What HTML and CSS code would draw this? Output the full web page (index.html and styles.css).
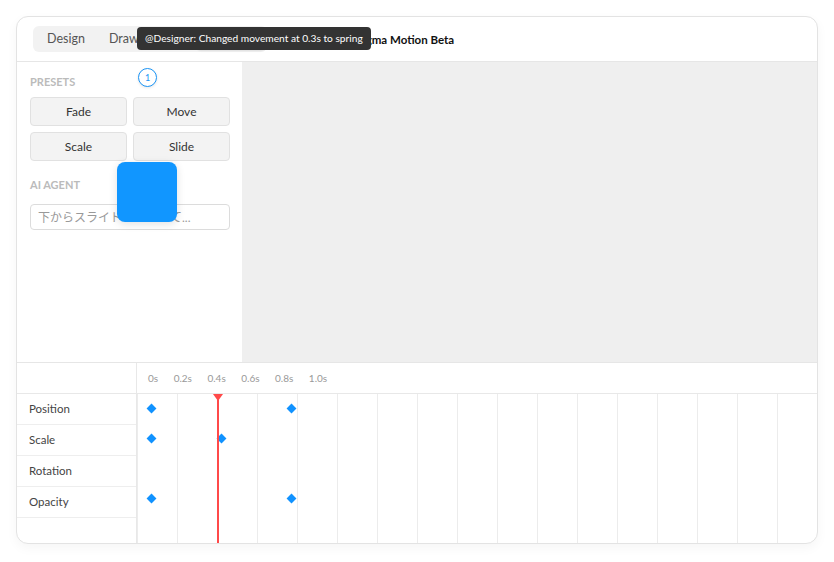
FILE: index.html
```html
<!DOCTYPE html>
<html lang="en">
<head>
    <meta charset="UTF-8">
    <meta name="viewport" content="width=device-width, initial-scale=1.0">
    <title>Figma Motion Beta</title>
    <link rel="stylesheet" href="styles.css">
</head>
<body>
<div class="app">
    <div class="header">
        <div class="tabs">
            <span class="tab">Design</span>
            <span class="tab">Draw</span>
            <span class="tab">Dev</span>
            <span class="tab active">Motion</span>
        </div>
        <div class="title">Figma Motion Beta</div>
    </div>
    <div class="tooltip">@Designer: Changed movement at 0.3s to spring</div>

    <div class="main">
        <div class="sidebar">
            <div class="section-label">PRESETS</div>
            <div class="preset-grid">
                <button class="preset">Fade</button>
                <button class="preset">Move</button>
                <button class="preset">Scale</button>
                <button class="preset">Slide</button>
            </div>
            <div class="section-label agent-label">AI AGENT</div>
            <input class="agent-input" type="text" placeholder="下からスライドインさせて...">
            <span class="comment-badge">1</span>
            <div class="drag-box"></div>
        </div>
        <div class="canvas"></div>
    </div>

    <div class="timeline">
        <div class="corner"></div>
        <div class="ruler">
            <span>0s</span>
            <span>0.2s</span>
            <span>0.4s</span>
            <span>0.6s</span>
            <span>0.8s</span>
            <span>1.0s</span>
        </div>
        <div class="labels">
            <div class="label-row">Position</div>
            <div class="label-row">Scale</div>
            <div class="label-row">Rotation</div>
            <div class="label-row">Opacity</div>
        </div>
        <div class="tracks">
            <div class="track">
                <span class="key" style="left: 14px"></span>
                <span class="key" style="left: 154px"></span>
            </div>
            <div class="track">
                <span class="key" style="left: 14px"></span>
                <span class="key" style="left: 84px"></span>
            </div>
            <div class="track"></div>
            <div class="track">
                <span class="key" style="left: 14px"></span>
                <span class="key" style="left: 154px"></span>
            </div>
            <div class="playhead" style="left: 80px"></div>
        </div>
    </div>
</div>
</body>
</html>
```

FILE: styles.css
```css
body {
    font-family: 'Lato', 'Noto Sans CJK JP', sans-serif;
    background-color: #ffffff;
    margin: 0;
    padding: 16px;
    color: #333;
}
.app {
    position: relative;
    width: 800px;
    height: 526px;
    border: 1px solid #e3e3e3;
    border-radius: 12px;
    box-shadow: 0 4px 12px rgba(0, 0, 0, 0.04);
    overflow: hidden;
    display: flex;
    flex-direction: column;
    background-color: #fff;
}
.header {
    height: 44px;
    flex: none;
    display: flex;
    align-items: center;
    padding-left: 16px;
    border-bottom: 1px solid #e6e6e6;
}
.tabs {
    display: flex;
    padding: 2px;
    background-color: #f2f2f2;
    border-radius: 6px;
}
.tab {
    height: 22px;
    line-height: 22px;
    padding: 0 12px;
    font-size: 12.5px;
    color: #555;
    border-radius: 4px;
}
.tab.active {
    padding: 0 14px;
    background-color: #fff;
    color: #222;
    box-shadow: 0 1px 2px rgba(0, 0, 0, 0.08);
}
.title {
    margin-left: 89px;
    font-size: 11.5px;
    font-weight: bold;
    color: #111;
}
.tooltip {
    position: absolute;
    left: 120px;
    top: 10px;
    height: 23px;
    line-height: 23px;
    padding: 0 8px;
    background-color: #333;
    color: #fff;
    font-size: 10.2px;
    border-radius: 4px;
    white-space: nowrap;
    z-index: 10;
}
.main {
    height: 300px;
    flex: none;
    display: flex;
}
.sidebar {
    position: relative;
    width: 200px;
    padding: 12px 12px 0 13px;
}
.section-label {
    font-size: 11px;
    font-weight: bold;
    color: #bbb;
    line-height: 16px;
    margin-bottom: 7px;
}
.agent-label {
    margin-top: 16px;
    margin-bottom: 11px;
}
.preset-grid {
    display: grid;
    grid-template-columns: 97px 97px;
    gap: 6px;
}
.preset {
    height: 29px;
    border: 1px solid #e1e1e1;
    border-radius: 4px;
    background-color: #f3f3f3;
    font-family: inherit;
    font-size: 12px;
    color: #333;
    padding: 0;
}
.agent-input {
    box-sizing: border-box;
    width: 200px;
    height: 26px;
    border: 1px solid #dcdcdc;
    border-radius: 4px;
    padding: 0 7px;
    font-family: inherit;
    font-size: 12px;
    color: #333;
}
.agent-input::placeholder {
    color: #999;
}
.comment-badge {
    position: absolute;
    left: 121px;
    top: 6px;
    width: 17px;
    height: 17px;
    border: 1px solid #1a94f5;
    border-radius: 50%;
    background-color: #fff;
    color: #1a94f5;
    font-size: 9px;
    line-height: 17px;
    text-align: center;
    box-shadow: 0 1px 3px rgba(0, 0, 0, 0.1);
}
.drag-box {
    position: absolute;
    left: 100px;
    top: 100px;
    width: 60px;
    height: 60px;
    border-radius: 8px;
    background-color: #1196ff;
    box-shadow: 0 2px 8px rgba(0, 0, 0, 0.12);
}
.canvas {
    flex: 1;
    background-color: #efefef;
}
.timeline {
    flex: 1;
    display: grid;
    grid-template-columns: 120px 1fr;
    grid-template-rows: 31px 1fr;
    border-top: 1px solid #e6e6e6;
}
.corner {
    border-right: 1px solid #e8e8e8;
    border-bottom: 1px solid #e8e8e8;
}
.ruler {
    display: flex;
    align-items: center;
    gap: 15.5px;
    padding-left: 11px;
    font-size: 10px;
    color: #999;
    border-bottom: 1px solid #e8e8e8;
}
.labels {
    border-right: 1px solid #e8e8e8;
}
.label-row {
    height: 30px;
    line-height: 30px;
    padding-left: 12px;
    font-size: 11.5px;
    color: #444;
    border-bottom: 1px solid #eee;
}
.tracks {
    position: relative;
    background-image: linear-gradient(to right, #ececec 1px, transparent 1px);
    background-size: 40px 100%;
    background-position: 40px 0;
}
.track {
    position: relative;
    height: 30px;
}
.key {
    position: absolute;
    top: 11px;
    width: 7px;
    height: 7px;
    margin-left: -3px;
    background-color: #1092ff;
    transform: rotate(45deg);
}
.playhead {
    position: absolute;
    top: 0;
    bottom: 0;
    width: 2px;
    background-color: #ff4a4a;
}
.playhead::before {
    content: "";
    position: absolute;
    top: 0;
    left: -4px;
    border-left: 5px solid transparent;
    border-right: 5px solid transparent;
    border-top: 7px solid #ff4a4a;
}
```
